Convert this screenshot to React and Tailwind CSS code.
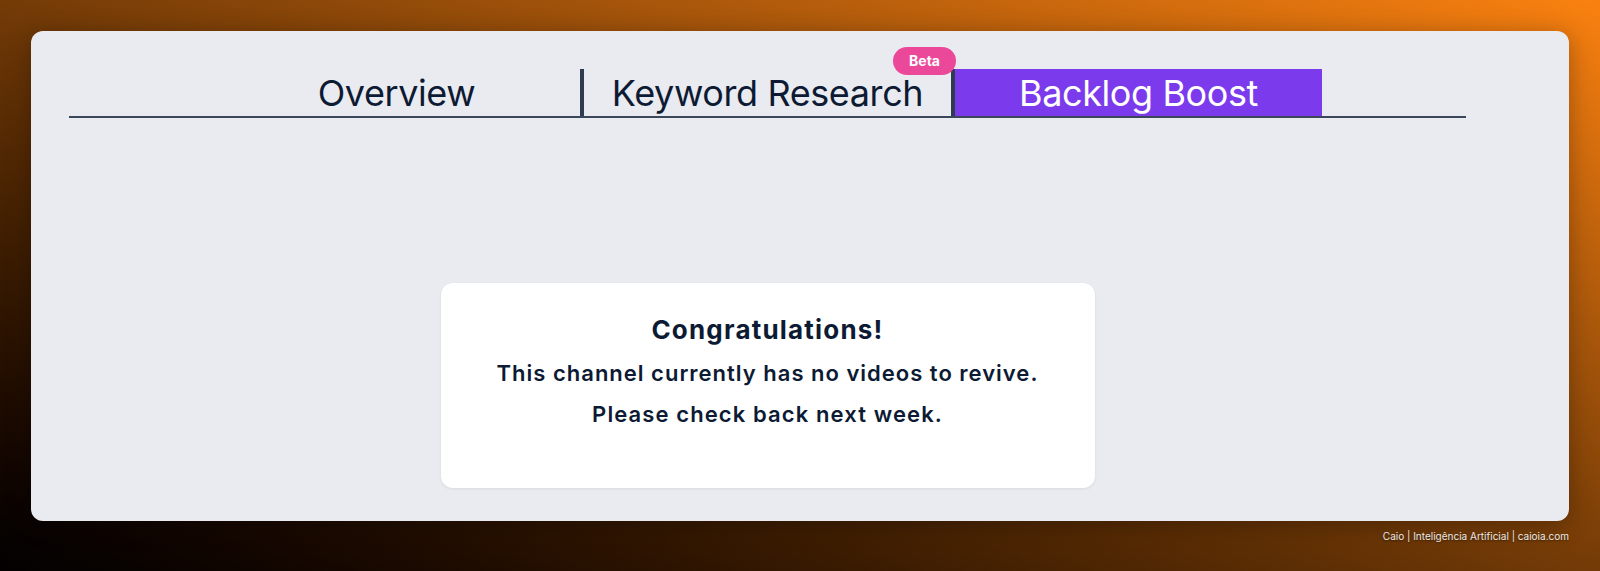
export default function App() {
  return (
    <div className="w-full h-[571px] overflow-hidden bg-linear-to-tr from-[#030100] via-[#743b07] to-[#fa8110] px-[31px] pt-[31px] font-['Inter',sans-serif]">
      <div className="h-[490px] rounded-xl bg-[#eaebf0] shadow-[0_4px_24px_rgba(0,0,0,0.3)] pl-[38px] pr-[103px] pt-[38px]">
        <div className="flex justify-center border-b-2 border-[#3b4658]">
          <div className="w-[367px] h-[47px] flex items-center justify-center text-[36px] leading-[40px] tracking-[-0.4px] text-[#0d1a33]">
            Overview
          </div>
          <div className="relative w-[371px] h-[47px] border-l-4 border-[#2f3b4e] flex items-center justify-center text-[36px] leading-[40px] tracking-[-0.4px] text-[#0d1a33]">
            Keyword Research
            <span className="absolute -top-[22px] -right-[5px] h-[28px] w-[63px] rounded-full bg-[#ec4899] text-white text-[14px] tracking-normal font-bold flex items-center justify-center">
              Beta
            </span>
          </div>
          <div className="w-[371px] h-[47px] border-l-4 border-[#2f3b4e] bg-[#7c3aed] flex items-center justify-center text-[36px] leading-[40px] tracking-[-0.4px] text-white">
            Backlog Boost
          </div>
        </div>
        <div className="mt-[165px] mx-auto w-[654px] h-[205px] bg-white rounded-xl shadow-[0_1px_3px_rgba(0,0,0,0.08)] pt-[31px] text-center text-[#0d1a33]">
          <h2 className="text-[26px] leading-[32px] font-bold tracking-[1.2px]">Congratulations!</h2>
          <p className="mt-[13px] text-[22px] leading-[28px] font-semibold tracking-[1px]">This channel currently has no videos to revive.</p>
          <p className="mt-[13px] text-[22px] leading-[28px] font-semibold tracking-[1.1px]">Please check back next week.</p>
        </div>
      </div>
      <div className="flex justify-end mt-[8px]">
        <span className="text-[10px] leading-[14px] text-white/90 [text-shadow:0_1px_2px_rgba(0,0,0,0.5)]">
          Caio | Inteligência Artificial | caioia.com
        </span>
      </div>
    </div>
  );
}
